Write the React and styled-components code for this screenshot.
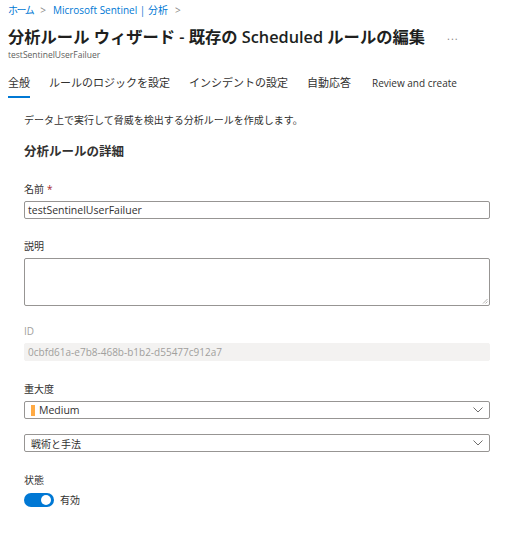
import React from "react";
import styled, { createGlobalStyle } from "styled-components";

const Global = createGlobalStyle`
  html, body { margin: 0; padding: 0; background: #fff; }
  body {
    font-family: "Open Sans", "Noto Sans CJK JP", sans-serif;
    color: #323130;
  }
  * { box-sizing: border-box; }
`;

const Page = styled.div`
  width: 527px;
  height: 544px;
  overflow: hidden;
  background: #fff;
`;

const Header = styled.div`
  padding: 3px 8px 0 8px;
`;

const Breadcrumb = styled.div`
  display: flex;
  align-items: center;
  gap: 5px;
  font-size: 10px;
  line-height: 14px;
  color: #0078d4;
`;

const Crumb = styled.span`
  letter-spacing: ${(p) => (p.$tight ? "-1.5px" : "0")};
`;

const Sep = styled.span`
  color: #8a8886;
  font-size: 10px;
  margin: 0 2px;
`;

const TitleRow = styled.div`
  display: flex;
  align-items: center;
  margin-top: 8px;
  height: 24px;
`;

const Title = styled.h1`
  margin: 0;
  font-size: 16.3px;
  line-height: 24px;
  font-weight: 600;
  color: #201f1e;
  white-space: nowrap;
`;

const More = styled.span`
  margin-left: 22px;
  color: #8a8886;
  font-size: 11px;
  letter-spacing: 1px;
  position: relative;
  top: -2px;
`;

const Subtitle = styled.div`
  font-size: 8.5px;
  line-height: 11px;
  color: #605e5c;
`;

const Tabs = styled.div`
  display: flex;
  gap: 19px;
  margin-top: 15px;
`;

const Tab = styled.div`
  font-size: ${(p) => (p.$latin ? 10 : 11)}px;
  line-height: 16px;
  padding-bottom: 5px;
  color: #323130;
  border-bottom: 2px solid ${(p) => (p.$active ? "#0078d4" : "transparent")};
  white-space: nowrap;
  margin-left: ${(p) => p.$extra || 0}px;
`;

const Content = styled.div`
  padding: 14px 0 0 24px;
  width: 490px;
`;

const Intro = styled.p`
  margin: 0;
  font-size: 10px;
  line-height: 16px;
  color: #323130;
`;

const Heading = styled.h2`
  margin: 15px 0 20px 0;
  font-size: 12.5px;
  line-height: 18px;
  font-weight: 700;
  color: #323130;
`;

const Field = styled.div`
  margin-bottom: ${(p) => (p.$mb !== undefined ? p.$mb : 18)}px;
`;

const Label = styled.div`
  font-size: 10px;
  line-height: 16px;
  margin-bottom: 4px;
  color: ${(p) => (p.$disabled ? "#a19f9d" : "#323130")};
`;

const Req = styled.span`
  color: #a4262c;
  margin-left: 3px;
`;

const Box = styled.div`
  position: relative;
  height: ${(p) => p.$h || 18}px;
  border: 1px solid ${(p) => (p.$disabled ? "#f3f2f1" : "#979593")};
  background: ${(p) => (p.$disabled ? "#f3f2f1" : "#fff")};
  border-radius: 2px;
  display: flex;
  align-items: center;
  padding: 0 6px 0 3px;
  font-size: ${(p) => (p.$disabled ? 10 : 10.5)}px;
  color: ${(p) => (p.$disabled ? "#a19f9d" : "#323130")};
`;

const Grip = styled.svg`
  position: absolute;
  right: 1px;
  bottom: 1px;
`;

const SelectText = styled.div`
  flex: 1;
  display: flex;
  align-items: center;
  gap: 4px;
  padding-left: 3px;
  font-size: ${(p) => (p.$cjk ? 10 : 10.5)}px;
`;

const SevBar = styled.span`
  width: 4px;
  height: 11px;
  background: #ffaa44;
  display: inline-block;
`;

const ToggleRow = styled.div`
  display: flex;
  align-items: center;
  gap: 6px;
  font-size: 10px;
`;

const Toggle = styled.div`
  width: 30px;
  height: 14px;
  border-radius: 7px;
  background: #0078d4;
  display: flex;
  align-items: center;
  justify-content: flex-end;
  padding-right: 3px;
`;

const Knob = styled.div`
  width: 10px;
  height: 10px;
  border-radius: 50%;
  background: #fff;
`;

const Chevron = () => (
  <svg width="10" height="6" viewBox="0 0 10 6">
    <path d="M0.5 0.5 L5 5 L9.5 0.5" fill="none" stroke="#605e5c" strokeWidth="0.9" />
  </svg>
);

export default function App() {
  return (
    <Page>
      <Global />
      <Header>
        <Breadcrumb>
          <Crumb $tight>ホーム</Crumb>
          <Sep>&gt;</Sep>
          <Crumb>Microsoft Sentinel | 分析</Crumb>
          <Sep>&gt;</Sep>
        </Breadcrumb>
        <TitleRow>
          <Title>分析ルール ウィザード - 既存の Scheduled ルールの編集</Title>
          <More>...</More>
        </TitleRow>
        <Subtitle>testSentinelUserFailuer</Subtitle>
        <Tabs>
          <Tab $active>全般</Tab>
          <Tab>ルールのロジックを設定</Tab>
          <Tab>インシデントの設定</Tab>
          <Tab>自動応答</Tab>
          <Tab $latin $extra={2}>Review and create</Tab>
        </Tabs>
      </Header>
      <Content>
        <Intro>データ上で実行して脅威を検出する分析ルールを作成します。</Intro>
        <Heading>分析ルールの詳細</Heading>
        <Field $mb={19}>
          <Label>
            名前<Req>*</Req>
          </Label>
          <Box>testSentinelUserFailuer</Box>
        </Field>
        <Field $mb={17}>
          <Label>説明</Label>
          <Box $h={48}>
            <Grip width="6" height="6" viewBox="0 0 6 6">
              <path d="M1 5.5 L5.5 1 M3.5 5.5 L5.5 3.5" stroke="#a19f9d" strokeWidth="0.8" />
            </Grip>
          </Box>
        </Field>
        <Field $mb={20}>
          <Label $disabled>ID</Label>
          <Box $disabled>0cbfd61a-e7b8-468b-b1b2-d55477c912a7</Box>
        </Field>
        <Field $mb={15}>
          <Label>重大度</Label>
          <Box>
            <SelectText>
              <SevBar />
              Medium
            </SelectText>
            <Chevron />
          </Box>
        </Field>
        <Field $mb={20}>
          <Box>
            <SelectText $cjk>戦術と手法</SelectText>
            <Chevron />
          </Box>
        </Field>
        <Field>
          <Label>状態</Label>
          <ToggleRow>
            <Toggle>
              <Knob />
            </Toggle>
            有効
          </ToggleRow>
        </Field>
      </Content>
    </Page>
  );
}
